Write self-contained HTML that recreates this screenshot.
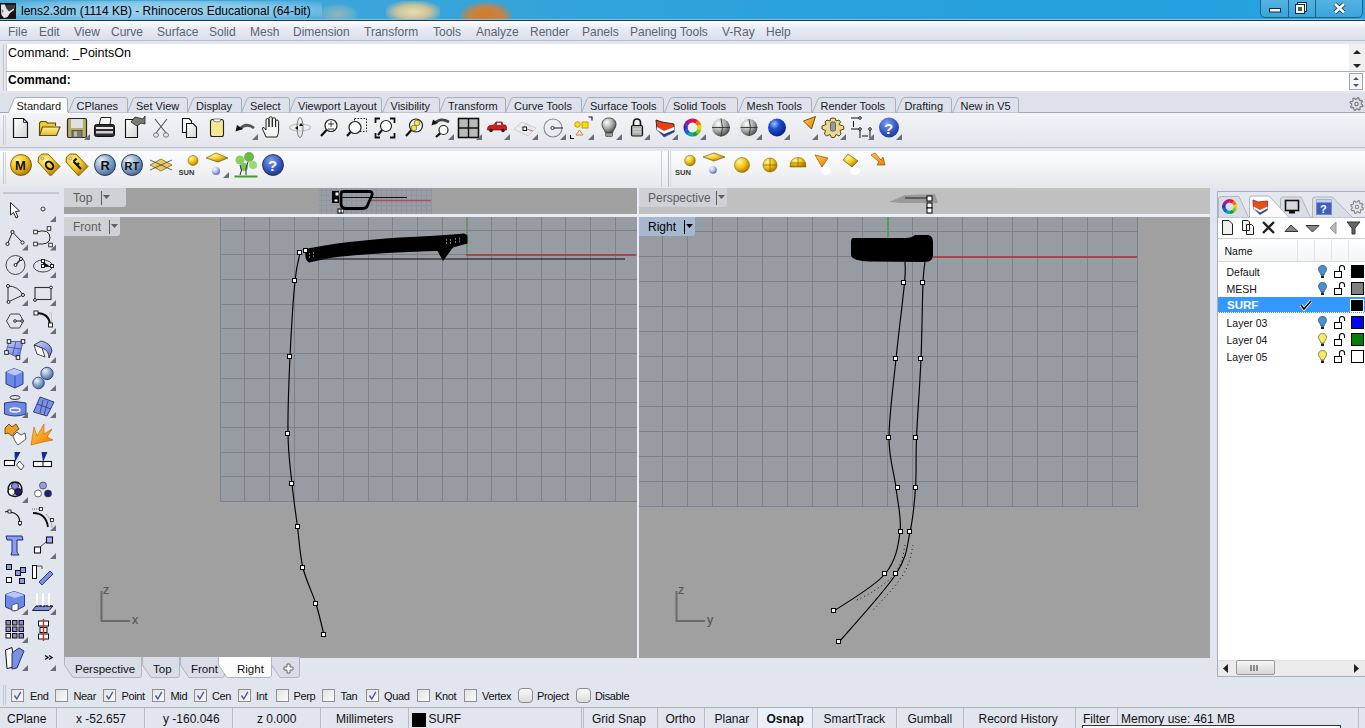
<!DOCTYPE html><html><head><meta charset="utf-8"><style>
*{margin:0;padding:0;box-sizing:border-box}
html,body{width:1365px;height:728px;overflow:hidden;background:#e1e5ee;font-family:"Liberation Sans",sans-serif;font-size:12px;color:#000;position:relative}
.a{position:absolute}
.t{position:absolute;white-space:nowrap;line-height:1}
svg{position:absolute;overflow:visible}
.tri{position:absolute;width:0;height:0;border-left:6px solid transparent;border-bottom:6px solid #6d7079}
.chk{position:absolute;width:13px;height:13px;border:1px solid #8f8f8f;background:linear-gradient(135deg,#e2e2e2,#fbfbfb)}
</style></head><body>
<div class="a" style="left:0px;top:0px;width:1365px;height:21px;background:linear-gradient(90deg,#4aaad9 0%,#3ea6da 20%,#30a3db 45%,#27a0dc 70%,#23a0dd 88%,#2ea4de 100%)"></div>
<div class="a" style="left:12px;top:1px;width:310px;height:19px;background:radial-gradient(ellipse at center,rgba(225,240,248,0.6) 0%,rgba(215,236,248,0.45) 55%,rgba(200,230,250,0) 100%)"></div>
<div class="a" style="left:318px;top:4px;width:40px;height:17px;background:radial-gradient(ellipse at 50% 60%,rgba(175,185,170,0.75) 0%,rgba(160,190,190,0.4) 50%,rgba(160,190,180,0) 75%)"></div>
<div class="a" style="left:386px;top:1px;width:54px;height:20px;background:radial-gradient(ellipse at 50% 55%,rgba(245,225,170,0.95) 0%,rgba(235,200,140,0.8) 45%,rgba(210,200,170,0) 80%)"></div>
<div class="a" style="left:460px;top:2px;width:52px;height:19px;background:radial-gradient(ellipse at 50% 80%,rgba(222,118,35,0.95) 0%,rgba(225,125,40,0.85) 45%,rgba(200,140,80,0) 78%)"></div>
<div class="a" style="left:0px;top:19px;width:1365px;height:1px;background:#7fc6ea"></div>
<div class="a" style="left:0px;top:20px;width:1365px;height:2px;background:#1f3346"></div>
<div class="a" style="left:0px;top:3px;width:16px;height:16px;background:#141414"></div>
<svg style="left:0px;top:3px" width="16" height="16" viewBox="0 0 16 16"><path d="M1 1.5 L5 1.5 L6 4 L14.5 2.5 L14 7 L10 10 L7.5 14 L4 15 L1.5 12 L1 8Z" fill="#e6e6e6"/><path d="M5.5 2 L14.5 2 L14 5.5 L9 8.5 L6 5Z" fill="#3a3a3a"/><path d="M1.5 6 L4 8 L2 10Z" fill="#777"/></svg>
<div class="t" style="left:21px;top:5px;font-size:12px;color:#000;">lens2.3dm (1114 KB) - Rhinoceros Educational (64-bit)</div>
<div class="a" style="left:1260px;top:-3px;width:103px;height:21px;border:1px solid #1d5f8a;border-radius:0 0 5px 5px;background:linear-gradient(#56b4e2,#3aa4dc)"></div>
<div class="a" style="left:1288px;top:0px;width:1px;height:17px;background:#1d5f8a"></div>
<div class="a" style="left:1315px;top:0px;width:1px;height:17px;background:#1d5f8a"></div>
<svg style="left:1260px;top:0px" width="103" height="18" viewBox="0 0 103 18"><rect x="9.5" y="8.5" width="11" height="3.5" fill="#f4f4f4" stroke="#1a2a3a" stroke-width="1"/><rect x="37.5" y="2.5" width="9" height="9" fill="#f4f4f4" stroke="#1a2a3a"/><rect x="35.5" y="4.5" width="9" height="9" fill="#f4f4f4" stroke="#1a2a3a"/><rect x="38" y="7" width="4" height="4" fill="#3a6a4a"/><path d="M75 4 L84 12.5 M84 4 L75 12.5" stroke="#1a2a3a" stroke-width="4.4"/><path d="M75 4 L84 12.5 M84 4 L75 12.5" stroke="#f6f6f6" stroke-width="2.8"/></svg>
<div class="a" style="left:0px;top:21px;width:1365px;height:20px;background:linear-gradient(#fbfcfe 0%,#e8ebf4 40%,#d9deec 100%)"></div>
<div class="a" style="left:0px;top:40px;width:1365px;height:1px;background:#b6bcc9"></div>
<div class="t" style="left:8px;top:25.5px;font-size:12px;color:#5a6474;">File</div>
<div class="t" style="left:39px;top:25.5px;font-size:12px;color:#5a6474;">Edit</div>
<div class="t" style="left:74px;top:25.5px;font-size:12px;color:#5a6474;">View</div>
<div class="t" style="left:111px;top:25.5px;font-size:12px;color:#5a6474;">Curve</div>
<div class="t" style="left:157px;top:25.5px;font-size:12px;color:#5a6474;">Surface</div>
<div class="t" style="left:209px;top:25.5px;font-size:12px;color:#5a6474;">Solid</div>
<div class="t" style="left:250px;top:25.5px;font-size:12px;color:#5a6474;">Mesh</div>
<div class="t" style="left:293px;top:25.5px;font-size:12px;color:#5a6474;">Dimension</div>
<div class="t" style="left:364px;top:25.5px;font-size:12px;color:#5a6474;">Transform</div>
<div class="t" style="left:433px;top:25.5px;font-size:12px;color:#5a6474;">Tools</div>
<div class="t" style="left:476px;top:25.5px;font-size:12px;color:#5a6474;">Analyze</div>
<div class="t" style="left:530px;top:25.5px;font-size:12px;color:#5a6474;">Render</div>
<div class="t" style="left:582px;top:25.5px;font-size:12px;color:#5a6474;">Panels</div>
<div class="t" style="left:630px;top:25.5px;font-size:12px;color:#5a6474;">Paneling Tools</div>
<div class="t" style="left:722px;top:25.5px;font-size:12px;color:#5a6474;">V-Ray</div>
<div class="t" style="left:766px;top:25.5px;font-size:12px;color:#5a6474;">Help</div>
<div class="a" style="left:0px;top:41px;width:1365px;height:52px;background:#e4e7ee"></div>
<div class="a" style="left:3px;top:44px;width:1px;height:47px;background:#c0c4cc"></div>
<div class="a" style="left:6px;top:44px;width:1359px;height:47px;background:#fff;border-left:1px solid #c5c9d2"></div>
<div class="a" style="left:6px;top:71px;width:1359px;height:1px;background:#a9aeb7"></div>
<div class="t" style="left:8px;top:47px;font-size:12.5px;color:#000;">Command: _PointsOn</div>
<div class="t" style="left:8px;top:74px;font-size:12px;color:#000;font-weight:bold">Command:</div>
<div class="a" style="left:1349px;top:44px;width:16px;height:27px;background:#f0f0f0"></div>
<svg style="left:1349px;top:44px" width="16" height="47" viewBox="0 0 16 47"><path d="M4 10 L8 6 L12 10Z M4 20 L8 24 L12 20Z" fill="#222"/><rect x="0.5" y="29.5" width="13" height="16" fill="#f4f5f8" stroke="#a0a4ac"/><path d="M4 36 L7 33 L10 36Z M4 40 L7 43 L10 40Z" fill="#556"/></svg>
<div class="a" style="left:0px;top:93px;width:1365px;height:20px;background:#dde1ea"></div>
<div class="a" style="left:0px;top:112px;width:1365px;height:1px;background:#a3a9b4"></div>
<svg style="left:952px;top:97px" width="75" height="16" viewBox="0 0 75 16"><path d="M0.5 15.5 L6 2 Q7 0.5 9 0.5 L64 0.5 Q66.5 0.5 66.5 3 L66.5 15.5" fill="#dde1ec" stroke="#a9afbb"/></svg>
<div class="t" style="left:960.5px;top:101px;font-size:11px;color:#1a1a1a;">New in V5</div>
<svg style="left:896px;top:97px" width="64" height="16" viewBox="0 0 64 16"><path d="M0.5 15.5 L6 2 Q7 0.5 9 0.5 L53 0.5 Q55.5 0.5 55.5 3 L55.5 15.5" fill="#dde1ec" stroke="#a9afbb"/></svg>
<div class="t" style="left:904.5px;top:101px;font-size:11px;color:#1a1a1a;">Drafting</div>
<svg style="left:812px;top:97px" width="92" height="16" viewBox="0 0 92 16"><path d="M0.5 15.5 L6 2 Q7 0.5 9 0.5 L81 0.5 Q83.5 0.5 83.5 3 L83.5 15.5" fill="#dde1ec" stroke="#a9afbb"/></svg>
<div class="t" style="left:820.5px;top:101px;font-size:11px;color:#1a1a1a;">Render Tools</div>
<svg style="left:738px;top:97px" width="82" height="16" viewBox="0 0 82 16"><path d="M0.5 15.5 L6 2 Q7 0.5 9 0.5 L71 0.5 Q73.5 0.5 73.5 3 L73.5 15.5" fill="#dde1ec" stroke="#a9afbb"/></svg>
<div class="t" style="left:746.5px;top:101px;font-size:11px;color:#1a1a1a;">Mesh Tools</div>
<svg style="left:664px;top:97px" width="82" height="16" viewBox="0 0 82 16"><path d="M0.5 15.5 L6 2 Q7 0.5 9 0.5 L71 0.5 Q73.5 0.5 73.5 3 L73.5 15.5" fill="#dde1ec" stroke="#a9afbb"/></svg>
<div class="t" style="left:673px;top:101px;font-size:11px;color:#1a1a1a;">Solid Tools</div>
<svg style="left:581px;top:97px" width="91" height="16" viewBox="0 0 91 16"><path d="M0.5 15.5 L6 2 Q7 0.5 9 0.5 L80 0.5 Q82.5 0.5 82.5 3 L82.5 15.5" fill="#dde1ec" stroke="#a9afbb"/></svg>
<div class="t" style="left:590px;top:101px;font-size:11px;color:#1a1a1a;">Surface Tools</div>
<svg style="left:505px;top:97px" width="85" height="16" viewBox="0 0 85 16"><path d="M0.5 15.5 L6 2 Q7 0.5 9 0.5 L74 0.5 Q76.5 0.5 76.5 3 L76.5 15.5" fill="#dde1ec" stroke="#a9afbb"/></svg>
<div class="t" style="left:514px;top:101px;font-size:11px;color:#1a1a1a;">Curve Tools</div>
<svg style="left:439px;top:97px" width="75" height="16" viewBox="0 0 75 16"><path d="M0.5 15.5 L6 2 Q7 0.5 9 0.5 L64 0.5 Q66.5 0.5 66.5 3 L66.5 15.5" fill="#dde1ec" stroke="#a9afbb"/></svg>
<div class="t" style="left:448px;top:101px;font-size:11px;color:#1a1a1a;">Transform</div>
<svg style="left:382px;top:97px" width="66" height="16" viewBox="0 0 66 16"><path d="M0.5 15.5 L6 2 Q7 0.5 9 0.5 L55 0.5 Q57.5 0.5 57.5 3 L57.5 15.5" fill="#dde1ec" stroke="#a9afbb"/></svg>
<div class="t" style="left:390.5px;top:101px;font-size:11px;color:#1a1a1a;">Visibility</div>
<svg style="left:289px;top:97px" width="101" height="16" viewBox="0 0 101 16"><path d="M0.5 15.5 L6 2 Q7 0.5 9 0.5 L90 0.5 Q92.5 0.5 92.5 3 L92.5 15.5" fill="#dde1ec" stroke="#a9afbb"/></svg>
<div class="t" style="left:298px;top:101px;font-size:11px;color:#1a1a1a;">Viewport Layout</div>
<svg style="left:241px;top:97px" width="57" height="16" viewBox="0 0 57 16"><path d="M0.5 15.5 L6 2 Q7 0.5 9 0.5 L46 0.5 Q48.5 0.5 48.5 3 L48.5 15.5" fill="#dde1ec" stroke="#a9afbb"/></svg>
<div class="t" style="left:250px;top:101px;font-size:11px;color:#1a1a1a;">Select</div>
<svg style="left:187px;top:97px" width="63" height="16" viewBox="0 0 63 16"><path d="M0.5 15.5 L6 2 Q7 0.5 9 0.5 L52 0.5 Q54.5 0.5 54.5 3 L54.5 15.5" fill="#dde1ec" stroke="#a9afbb"/></svg>
<div class="t" style="left:196px;top:101px;font-size:11px;color:#1a1a1a;">Display</div>
<svg style="left:127px;top:97px" width="69" height="16" viewBox="0 0 69 16"><path d="M0.5 15.5 L6 2 Q7 0.5 9 0.5 L58 0.5 Q60.5 0.5 60.5 3 L60.5 15.5" fill="#dde1ec" stroke="#a9afbb"/></svg>
<div class="t" style="left:136px;top:101px;font-size:11px;color:#1a1a1a;">Set View</div>
<svg style="left:68px;top:97px" width="68" height="16" viewBox="0 0 68 16"><path d="M0.5 15.5 L6 2 Q7 0.5 9 0.5 L57 0.5 Q59.5 0.5 59.5 3 L59.5 15.5" fill="#dde1ec" stroke="#a9afbb"/></svg>
<div class="t" style="left:76.5px;top:101px;font-size:11px;color:#1a1a1a;">CPlanes</div>
<svg style="left:8px;top:97px" width="68" height="16" viewBox="0 0 68 16"><path d="M0.5 15.5 L6 2 Q7 0.5 9 0.5 L57 0.5 Q59.5 0.5 59.5 3 L59.5 15.5" fill="#fbfbfd" stroke="#a9afbb"/></svg>
<div class="a" style="left:9px;top:112px;width:59px;height:2px;background:#fbfbfd"></div>
<div class="t" style="left:16.5px;top:101px;font-size:11px;color:#1a1a1a;">Standard</div>
<svg style="left:1349px;top:96px" width="16" height="16" viewBox="0 0 16 16"><path d="M12.30 8.00 L13.88 9.27 L13.51 10.49 L11.49 10.67 L10.89 11.39 L11.11 13.40 L9.99 14.01 L8.44 12.71 L7.50 12.80 L6.23 14.38 L5.01 14.01 L4.83 11.99 L4.11 11.39 L2.10 11.61 L1.49 10.49 L2.79 8.94 L2.70 8.00 L1.12 6.73 L1.49 5.51 L3.51 5.33 L4.11 4.61 L3.89 2.60 L5.01 1.99 L6.56 3.29 L7.50 3.20 L8.77 1.62 L9.99 1.99 L10.17 4.01 L10.89 4.61 L12.90 4.39 L13.51 5.51 L12.21 7.06Z" fill="none" stroke="#777" stroke-width="1.1" stroke-linejoin="round"/><circle cx="7.5" cy="8" r="1.68" fill="none" stroke="#777" stroke-width="1.1"/></svg>
<div class="a" style="left:0px;top:113px;width:1365px;height:34px;background:linear-gradient(#f3f4f7,#e2e5eb)"></div>
<div class="a" style="left:3px;top:115px;width:1px;height:30px;background:#c5c9d1"></div>
<div class="a" style="left:0px;top:147px;width:1365px;height:1px;background:#b9bec8"></div>
<div class="a" style="left:0px;top:148px;width:1365px;height:3px;background:#e1e5ee"></div>
<div class="a" style="left:0px;top:151px;width:1365px;height:37px;background:linear-gradient(#fdfdfe,#f6f7f8 30%,#e5e7eb)"></div>
<div class="a" style="left:661px;top:151px;width:1px;height:36px;background:#c9ccd2"></div>
<div class="a" style="left:668px;top:151px;width:1px;height:36px;background:#b9bcc2"></div>
<div class="a" style="left:670px;top:151px;width:1px;height:36px;background:#d5d8dd"></div>
<div class="a" style="left:3px;top:152px;width:1px;height:32px;background:#c3c7cf"></div>
<div class="a" style="left:5px;top:152px;width:1px;height:32px;background:#d3d6dc"></div>
<div class="a" style="left:5px;top:115px;width:1px;height:30px;background:#d3d6dc"></div>
<div class="a" style="left:3px;top:192px;width:56px;height:2px;background:#c3c7cf"></div>
<svg style="left:0;top:0" width="1365" height="728" viewBox="0 0 1365 728"><defs>
<linearGradient id="gDoc" x1="0" y1="0" x2="1" y2="1"><stop offset="0" stop-color="#fff"/><stop offset="1" stop-color="#d4d4d4"/></linearGradient>
<linearGradient id="gYel" x1="0" y1="0" x2="0" y2="1"><stop offset="0" stop-color="#fff3a0"/><stop offset="1" stop-color="#e8b820"/></linearGradient>
<radialGradient id="gGold" cx="0.35" cy="0.3" r="0.75"><stop offset="0" stop-color="#fff6a0"/><stop offset="0.5" stop-color="#f5c518"/><stop offset="1" stop-color="#a87400"/></radialGradient>
<radialGradient id="gBlueS" cx="0.35" cy="0.3" r="0.8"><stop offset="0" stop-color="#e8f0ff"/><stop offset="0.45" stop-color="#8aa8d8"/><stop offset="1" stop-color="#2c4f8c"/></radialGradient>
<radialGradient id="gGray" cx="0.35" cy="0.3" r="0.8"><stop offset="0" stop-color="#fff"/><stop offset="0.5" stop-color="#aaa"/><stop offset="1" stop-color="#333"/></radialGradient>
<radialGradient id="gBlue" cx="0.35" cy="0.3" r="0.8"><stop offset="0" stop-color="#9fc4ff"/><stop offset="0.35" stop-color="#2050d0"/><stop offset="1" stop-color="#001a70"/></radialGradient>
<radialGradient id="gHelp" cx="0.4" cy="0.3" r="0.8"><stop offset="0" stop-color="#7e9ff0"/><stop offset="0.6" stop-color="#2f55c0"/><stop offset="1" stop-color="#1b3080"/></radialGradient>
<radialGradient id="gSB" cx="0.35" cy="0.3" r="0.8"><stop offset="0" stop-color="#eef4fa"/><stop offset="0.5" stop-color="#88a8cc"/><stop offset="1" stop-color="#3a5a88"/></radialGradient>
<radialGradient id="gSB2" cx="0.35" cy="0.3" r="0.8"><stop offset="0" stop-color="#fff"/><stop offset="0.5" stop-color="#a8b8e8"/><stop offset="1" stop-color="#4058b0"/></radialGradient>
<linearGradient id="gBlueF" x1="0" y1="0" x2="1" y2="1"><stop offset="0" stop-color="#c8d4ff"/><stop offset="1" stop-color="#5a70d8"/></linearGradient>
<linearGradient id="gOr" x1="0" y1="0" x2="1" y2="1"><stop offset="0" stop-color="#ffd040"/><stop offset="1" stop-color="#ee7a00"/></linearGradient>
<linearGradient id="gWheel" x1="0" y1="0" x2="1" y2="1"><stop offset="0" stop-color="#e0107a"/><stop offset="0.3" stop-color="#ffb000"/><stop offset="0.55" stop-color="#30c040"/><stop offset="0.8" stop-color="#2090f0"/><stop offset="1" stop-color="#7020b0"/></linearGradient>
</defs><path d="M13.5 118.5 H23.5 L27.5 122.5 V137.5 H13.5Z" fill="url(#gDoc)" stroke="#111" stroke-width="1.2"/><path d="M23.5 118.5 V122.5 H27.5" fill="none" stroke="#111" stroke-width="0.8"/><path d="M39.5 135.5 V123 L41 121.5 H46 L47.5 123 H55.5 V126" fill="#f0c838" stroke="#5e4a08" stroke-width="1.1"/><path d="M39.5 135.5 L42.5 127 H60 L56.5 135.5Z" fill="url(#gYel)" stroke="#5e4a08" stroke-width="1.1"/><rect x="67.5" y="118.5" width="19" height="19" rx="1.5" fill="#b5ad6a" stroke="#2a2a1a" stroke-width="1.2"/><rect x="71" y="119" width="12" height="9" fill="#e0e0e0"/><rect x="72" y="130.5" width="10" height="7" fill="#7d7d70" stroke="#333" stroke-width="0.6"/><rect x="74" y="131.5" width="3" height="5" fill="#bbb"/><path d="M90 140 L84 140 L90 134Z" fill="#6b6e76"/><path d="M99 125 L101 117.5 H111 L110 125Z" fill="#f4f4f4" stroke="#222" stroke-width="1"/><rect x="94.5" y="124.5" width="20" height="12" rx="2" fill="#2c2c2c" stroke="#111"/><rect x="96" y="127" width="17" height="2" fill="#e8e8e8"/><rect x="96" y="131" width="17" height="2.5" fill="#cfcfcf"/><path d="M125.5 119.5 H133 L137.5 124 V137.5 H125.5Z" fill="url(#gDoc)" stroke="#111" stroke-width="1.1"/><path d="M131 122 L135 117 L143 119 L145 116 V124 L141 123 L137 126Z" fill="#7a7a7a" stroke="#222" stroke-width="0.8"/><path d="M155 119 L166 133 M167 119 L156 133" stroke="#555" stroke-width="1.1" fill="none"/><ellipse cx="156" cy="135" rx="2.5" ry="2.2" fill="none" stroke="#777" stroke-width="1"/><ellipse cx="166" cy="135" rx="2.5" ry="2.2" fill="none" stroke="#777" stroke-width="1"/><path d="M182.5 118.5 H189 L191.5 121 V132.5 H182.5Z" fill="#fff" stroke="#111" stroke-width="1.1"/><path d="M186.5 123.5 H193 L196.5 127 V137.5 H186.5Z" fill="url(#gDoc)" stroke="#111" stroke-width="1.1"/><rect x="210.5" y="119.5" width="13" height="17" rx="2" fill="#f6e890" stroke="#222" stroke-width="1.1"/><path d="M213.5 119 H220.5 V121 Q217 123 213.5 121Z" fill="#fff" stroke="#555" stroke-width="0.7"/><path d="M240 129 Q246 122 254 128" fill="none" stroke="#555" stroke-width="2.8"/><path d="M235.5 131.5 L237 125 L243 129Z" fill="#111"/><path d="M258 140 L252 140 L258 134Z" fill="#6b6e76"/><path d="M266 137 L262.5 129 Q262 127 264 127.5 L266 130 V120 Q266 118.5 267.5 118.5 Q269 118.5 269 120 V127 V118 Q269 116.8 270.7 116.8 Q272.3 116.8 272.3 118 V127 V119 Q272.3 117.8 274 117.8 Q275.6 117.8 275.6 119 V127 V121 Q275.6 120 277 120 Q278.6 120 278.6 121.5 V130 Q278.6 134 277 137Z" fill="#f4f4f4" stroke="#222" stroke-width="1"/><ellipse cx="300" cy="127.5" rx="10.5" ry="3.5" fill="none" stroke="#c0c0c0" stroke-width="1.2"/><ellipse cx="300" cy="127.5" rx="3" ry="10" fill="none" stroke="#777" stroke-width="1"/><path d="M301 123 L303 126 H299Z M295 128 L298 126 V130Z" fill="#111"/><line x1="326.8" y1="129.7" x2="321" y2="136" stroke="#111" stroke-width="2.2"/><circle cx="331" cy="125.5" r="6" fill="#fff" stroke="#222" stroke-width="1.2"/><path d="M328 124 H334 M331 121 V127 M328 129 H334" stroke="#222" stroke-width="0.9"/><rect x="354.5" y="118.5" width="12" height="13" fill="none" stroke="#222" stroke-width="1" stroke-dasharray="1.6 1.4"/><line x1="350.8" y1="131.7" x2="347" y2="136" stroke="#111" stroke-width="2.2"/><circle cx="355" cy="127.5" r="6" fill="#fff" stroke="#222" stroke-width="1.2"/><path d="M375.5 123 V118.5 H380 M390 118.5 H394.5 V123 M375.5 133 V137.5 H380 M390 137.5 H394.5 V133" fill="none" stroke="#111" stroke-width="1.8"/><line x1="382.15" y1="129.85" x2="378" y2="135" stroke="#111" stroke-width="2.2"/><circle cx="386" cy="126" r="5.5" fill="#fff" stroke="#222" stroke-width="1.2"/><line x1="411.45" y1="130.05" x2="406" y2="136" stroke="#111" stroke-width="2.2"/><circle cx="416" cy="125.5" r="6.5" fill="#f3f3f3" stroke="#222" stroke-width="1.2"/><circle cx="417" cy="123" r="2.8" fill="#ffe830" stroke="#666" stroke-width="0.8"/><circle cx="414" cy="128" r="2.8" fill="#ffe830" stroke="#666" stroke-width="0.8"/><path d="M434 124 Q440 117 449 122" fill="none" stroke="#444" stroke-width="2.6"/><path d="M431.5 125.5 L433 119.5 L438 123Z" fill="#111"/><line x1="440.35" y1="133.15" x2="436" y2="137" stroke="#111" stroke-width="2.2"/><circle cx="443.5" cy="130" r="4.5" fill="#fff" stroke="#222" stroke-width="1.2"/><path d="M454 140 L448 140 L454 134Z" fill="#6b6e76"/><rect x="458.5" y="118.5" width="20" height="19" fill="#b9b9b9" stroke="#111" stroke-width="1.6"/><path d="M468.5 118.5 V137.5 M458.5 128 H478.5" stroke="#111" stroke-width="1.4"/><path d="M482 140 L476 140 L482 134Z" fill="#6b6e76"/><path d="M487.5 129 Q487.5 126 490 125.5 L494 125 L496 122 H502 L503 125 H505.5 Q506.5 126 506.5 128 V130 H487.5Z" fill="#d01c1c" stroke="#7a0a0a" stroke-width="0.7"/><circle cx="491" cy="130.5" r="1.8" fill="#222"/><circle cx="503" cy="130.5" r="1.8" fill="#222"/><rect x="497" y="122.8" width="4" height="2.2" fill="#fff"/><path d="M510 140 L504 140 L510 134Z" fill="#6b6e76"/><path d="M514 129 L522 122 L536 128 L528 136Z" fill="none" stroke="#c8c8c8" stroke-width="0.9"/><path d="M518 126 L532 132 M526 124 L532 129 M522 128 L528 122" stroke="#d0c0c0" stroke-width="0.6"/><rect x="523" y="127" width="3.5" height="3.5" fill="#fff" stroke="#111" stroke-width="1"/><path d="M527 129 L533 131" stroke="#b05050" stroke-width="0.7"/><path d="M538 140 L532 140 L538 134Z" fill="#6b6e76"/><circle cx="553" cy="128" r="9" fill="none" stroke="#888" stroke-width="1.1"/><line x1="554" y1="128" x2="563" y2="128" stroke="#222" stroke-width="1"/><circle cx="552.5" cy="128" r="1.6" fill="#fff" stroke="#222" stroke-width="0.9"/><path d="M566 140 L560 140 L566 134Z" fill="#6b6e76"/><circle cx="577.5" cy="124.5" r="2.8" fill="#ffe000" stroke="#b09000" stroke-width="0.8"/><rect x="582" y="122" width="6" height="6" fill="#ffe000" stroke="#b09000" stroke-width="0.8"/><path d="M576 135 L579.5 130 L583 135Z" fill="none" stroke="#d08030" stroke-width="1"/><path d="M570.5 135 V138.5 H574 M588.5 117 H592 V120.5" fill="none" stroke="#111" stroke-width="1.1"/><path d="M594 140 L588 140 L594 134Z" fill="#6b6e76"/><path d="M609 118 C614 118 616 121 616 124.5 C616 128 613 130 612.5 133 H605.5 C605 130 602 128 602 124.5 C602 121 604 118 609 118Z" fill="url(#gGray)" stroke="#444" stroke-width="0.9"/><rect x="605.5" y="133" width="7" height="3.5" rx="1" fill="#999" stroke="#444" stroke-width="0.7"/><path d="M622 140 L616 140 L622 134Z" fill="#6b6e76"/><path d="M633.5 126 V123 Q633.5 119 637 119 Q640.5 119 640.5 123 V126" fill="none" stroke="#111" stroke-width="1.6"/><rect x="631.5" y="125.5" width="11" height="10.5" rx="1.2" fill="#b0b0b0" stroke="#111" stroke-width="1.2"/><path d="M633 129 H641 M633 132 H641" stroke="#ddd" stroke-width="1.1"/><path d="M650 140 L644 140 L650 134Z" fill="#6b6e76"/><path d="M656 120 L662 122 L674 124 V132 L664 137 L657 130Z" fill="#e84010" stroke="#222" stroke-width="0.9"/><path d="M657 127 L664 131 L674 127 V132 L664 137 L657 130Z" fill="#fff"/><path d="M657.5 130 L664 134 L674 130 V132 L664 137Z" fill="#2a3e90"/><path d="M678 140 L672 140 L678 134Z" fill="#6b6e76"/><path d="M692.36 120.50 A7 7 0 0 1 696.73 121.92" fill="none" stroke="#e8102a" stroke-width="4.2"/><path d="M696.50 121.76 A7 7 0 0 1 699.20 125.47" fill="none" stroke="#f07010" stroke-width="4.2"/><path d="M699.11 125.20 A7 7 0 0 1 699.11 129.80" fill="none" stroke="#f0d000" stroke-width="4.2"/><path d="M699.20 129.53 A7 7 0 0 1 696.50 133.24" fill="none" stroke="#80c820" stroke-width="4.2"/><path d="M696.73 133.08 A7 7 0 0 1 692.36 134.50" fill="none" stroke="#10a040" stroke-width="4.2"/><path d="M692.64 134.50 A7 7 0 0 1 688.27 133.08" fill="none" stroke="#10a0a0" stroke-width="4.2"/><path d="M688.50 133.24 A7 7 0 0 1 685.80 129.53" fill="none" stroke="#1060e0" stroke-width="4.2"/><path d="M685.89 129.80 A7 7 0 0 1 685.89 125.20" fill="none" stroke="#3030b0" stroke-width="4.2"/><path d="M685.80 125.47 A7 7 0 0 1 688.50 121.76" fill="none" stroke="#8020a0" stroke-width="4.2"/><path d="M688.27 121.92 A7 7 0 0 1 692.64 120.50" fill="none" stroke="#c01070" stroke-width="4.2"/><path d="M706 140 L700 140 L706 134Z" fill="#6b6e76"/><circle cx="721" cy="127.5" r="9" fill="url(#gGray)"/><path d="M712 127.5 H730 M721 118.5 Q724 127 721 136.5" fill="none" stroke="#333" stroke-width="0.9"/><rect x="740" y="118" width="18" height="19" fill="none" stroke="#d0d0d0" stroke-width="0.6" stroke-dasharray="1 1"/><circle cx="749" cy="127.5" r="8.5" fill="url(#gGray)"/><path d="M740.5 127.5 H757.5 M749 119 Q752 127 749 136" fill="none" stroke="#333" stroke-width="0.9"/><path d="M762 140 L756 140 L762 134Z" fill="#6b6e76"/><circle cx="777" cy="127.5" r="9" fill="url(#gBlue)"/><path d="M790 140 L784 140 L790 134Z" fill="#6b6e76"/><path d="M803.5 121 L815.5 116.5 L811.5 129Z" fill="url(#gOr)" stroke="#6a4010" stroke-width="0.9"/><path d="M818 140 L812 140 L818 134Z" fill="#6b6e76"/><path d="M833 118 L835.5 118.5 L836 121 L839 120 L840.5 122 L839 124.5 L843.5 126 L844 129 L840 130.5 L841 134 L839 136 L836 134.5 L834.5 137.5 L831.5 137.5 L830 134.5 L826.5 136 L824.5 134 L825.5 130.5 L822 129 L822 126 L826 124.5 L825 122 L827 120 L830 121 L830.5 118.5Z" fill="#e8d890" stroke="#5a4a10" stroke-width="1"/><rect x="830.5" y="122" width="5" height="9" rx="1.5" fill="#999" stroke="#444" stroke-width="0.7"/><path d="M846 140 L840 140 L846 134Z" fill="#6b6e76"/><path d="M851 118 H859 M851 129 H860 M860 129 V138 M870 129 V138 M853.5 121 V127 M862 136 H868" stroke="#111" stroke-width="1" fill="none"/><circle cx="860" cy="118" r="1.3" fill="#fff" stroke="#111"/><circle cx="860" cy="129" r="1.3" fill="#fff" stroke="#111"/><circle cx="870" cy="129" r="1.3" fill="#fff" stroke="#111"/><path d="M874 140 L868 140 L874 134Z" fill="#6b6e76"/><circle cx="889" cy="127.5" r="10" fill="url(#gHelp)"/><text x="884" y="133.5" font-family="Liberation Sans" font-size="15" font-weight="bold" fill="#fff">?</text><path d="M902 140 L896 140 L902 134Z" fill="#6b6e76"/><circle cx="21" cy="165" r="10.5" fill="url(#gGold)" stroke="#6a4a00" stroke-width="0.8"/><text x="15" y="170" font-family="Liberation Sans" font-size="13" font-weight="bold" fill="#111">M</text><path d="M38 162 L38.5 157 L42 154 L48 154 L60 166.5 L50.5 176 Z" fill="url(#gGold)" stroke="#7a5a00" stroke-width="0.9"/><circle cx="42.5" cy="158.5" r="1.3" fill="#fff" stroke="#666" stroke-width="0.6"/><ellipse cx="49.5" cy="165.5" rx="4.2" ry="3.2" transform="rotate(45 49.5 165.5)" fill="none" stroke="#111" stroke-width="2"/><path d="M66 162 L66.5 157 L70 154 L76 154 L88 166.5 L78.5 176 Z" fill="url(#gGold)" stroke="#7a5a00" stroke-width="0.9"/><circle cx="70.5" cy="158.5" r="1.3" fill="#fff" stroke="#666" stroke-width="0.6"/><path d="M73.5 161.5 L81 169 M73.5 161.5 L76.5 158.5 M77 165 L79 163" stroke="#111" stroke-width="2.2" fill="none"/><circle cx="105" cy="165" r="10.5" fill="url(#gSB)" stroke="#1a2a5a" stroke-width="0.9"/><text x="100.5" y="170" font-family="Liberation Sans" font-size="13" font-weight="bold" fill="#111">R</text><circle cx="132" cy="165" r="10.5" fill="url(#gSB)" stroke="#1a2a5a" stroke-width="0.9"/><text x="124.5" y="169.5" font-family="Liberation Sans" font-size="11" font-weight="bold" fill="#111">RT</text><path d="M150 165 L161 159 L172 165 L161 171Z" fill="#e8c860" stroke="#7a5a10" stroke-width="0.7"/><path d="M150 160 L172 170 M150 170 L172 160" stroke="#555" stroke-width="0.9"/><circle cx="193" cy="160.5" r="5" fill="url(#gGold)" stroke="#8a6400" stroke-width="0.6"/><text x="178.5" y="175" font-family="Liberation Sans" font-size="7.5" font-weight="bold" fill="#333">SUN</text><path d="M206 158 L216 153 L228 158 L218 162Z" fill="url(#gGold)" stroke="#7a5a10" stroke-width="0.7"/><circle cx="216" cy="171" r="4" fill="url(#gSB2)"/><path d="M229 178 L223 178 L229 172Z" fill="#6b6e76"/><path d="M234.5 176.5 H257.5" stroke="#4a9a2a" stroke-width="2"/><circle cx="240" cy="160" r="4.5" fill="#8ad060"/><circle cx="249" cy="157" r="5" fill="#6ab84a"/><circle cx="253" cy="165" r="4" fill="#9ad870"/><circle cx="244" cy="167" r="4" fill="#7cc45a"/><path d="M246 175 Q245 168 248 162 M240 175 Q243 170 240 165" stroke="#333" stroke-width="1" fill="none"/><circle cx="273" cy="165" r="10.5" fill="url(#gHelp)" stroke="#111" stroke-width="0.7"/><text x="268" y="171" font-family="Liberation Sans" font-size="15" font-weight="bold" fill="#fff">?</text><circle cx="690" cy="160.5" r="5.3" fill="url(#gGold)" stroke="#8a6400" stroke-width="0.6"/><text x="675" y="175" font-family="Liberation Sans" font-size="7.5" font-weight="bold" fill="#333">SUN</text><path d="M703 157 L714 153 L725 157 L714 161Z" fill="url(#gGold)" stroke="#7a5a10" stroke-width="0.7"/><circle cx="713" cy="170" r="3.8" fill="url(#gSB2)"/><circle cx="742" cy="165" r="7.5" fill="url(#gGold)" stroke="#8a6400" stroke-width="0.6"/><circle cx="770" cy="165" r="7" fill="url(#gGold)" stroke="#8a6400" stroke-width="0.6"/><path d="M763 165 H777 M770 158 V172" stroke="#8a6400" stroke-width="0.8"/><path d="M790 167 Q790 157.5 798 157.5 Q806 157.5 806 167Z" fill="url(#gGold)" stroke="#8a6400" stroke-width="0.6"/><path d="M798 157.5 V167 M790 163 H806" stroke="#8a6400" stroke-width="0.7"/><ellipse cx="826" cy="171" rx="5" ry="4" fill="#fff" opacity="0.9"/><path d="M815 155 L828 158 L822 167Z" fill="url(#gOr)" stroke="#7a5a10" stroke-width="0.7"/><ellipse cx="855" cy="171" rx="5" ry="4" fill="#fff" opacity="0.9"/><path d="M843 160 L848 154 L858 161 L852 167Z" fill="url(#gGold)" stroke="#7a5a10" stroke-width="0.7"/><path d="M871 155 L875 153 L881 160 L883 157 L885 165 L877 165 L879 162Z" fill="url(#gOr)" stroke="#7a5a10" stroke-width="0.7"/><path d="M10.5 202.5 V215 L13.5 212.5 L16 218 L18 217 L15.5 211.5 L19.5 211Z" fill="#fff" stroke="#222" stroke-width="1"/><circle cx="43" cy="209" r="2" fill="#fff" stroke="#333" stroke-width="1"/><path d="M56 222 L50 222 L56 216Z" fill="#6b6e76"/><path d="M7.5 244 L12.5 232 L22.5 242.5" fill="none" stroke="#222" stroke-width="1"/><circle cx="7.5" cy="244" r="1.6" fill="#fff" stroke="#222"/><circle cx="12.5" cy="232" r="1.6" fill="#fff" stroke="#222"/><circle cx="22.5" cy="242.5" r="1.6" fill="#fff" stroke="#222"/><path d="M28 250.5 L22 250.5 L28 244.5Z" fill="#6b6e76"/><path d="M36 232 Q50 228 50 238 Q50 245 37 244" fill="none" stroke="#222" stroke-width="1"/><rect x="33.7" y="230.2" width="3.6" height="3.6" fill="#fff" stroke="#222" stroke-width="0.9"/><rect x="47.2" y="226.7" width="3.6" height="3.6" fill="#fff" stroke="#222" stroke-width="0.9"/><rect x="33.7" y="242.2" width="3.6" height="3.6" fill="#fff" stroke="#222" stroke-width="0.9"/><rect x="48.7" y="243.2" width="3.6" height="3.6" fill="#fff" stroke="#222" stroke-width="0.9"/><path d="M56 250.5 L50 250.5 L56 244.5Z" fill="#6b6e76"/><circle cx="15.5" cy="265" r="9.5" fill="none" stroke="#444" stroke-width="1"/><line x1="15.5" y1="265" x2="21" y2="259" stroke="#222" stroke-width="1.2"/><circle cx="15.5" cy="265" r="1.5" fill="#fff" stroke="#222"/><circle cx="21" cy="259" r="1.5" fill="#fff" stroke="#222"/><path d="M28 278 L22 278 L28 272Z" fill="#6b6e76"/><ellipse cx="43" cy="266" rx="9.5" ry="6" fill="none" stroke="#444" stroke-width="1"/><path d="M43.5 262 V266.5 H50" stroke="#222" stroke-width="1"/><rect x="41.5" y="259.5" width="3" height="3" fill="#fff" stroke="#222" stroke-width="1"/><rect x="41.5" y="264.5" width="3" height="3" fill="#fff" stroke="#222" stroke-width="1"/><rect x="50.5" y="264.5" width="3" height="3" fill="#fff" stroke="#222" stroke-width="1"/><path d="M56 278 L50 278 L56 272Z" fill="#6b6e76"/><path d="M8 286 Q18 286 23 295 L8 302Z" fill="none" stroke="#333" stroke-width="1"/><circle cx="8" cy="286" r="1.5" fill="#fff" stroke="#222"/><circle cx="23" cy="295" r="1.5" fill="#fff" stroke="#222"/><circle cx="8.5" cy="302" r="1.5" fill="#fff" stroke="#222"/><path d="M28 306 L22 306 L28 300Z" fill="#6b6e76"/><rect x="35" y="287.5" width="16" height="12" fill="none" stroke="#333" stroke-width="1.1"/><circle cx="51" cy="287.5" r="1.4" fill="#fff" stroke="#222"/><circle cx="35" cy="300" r="1.4" fill="#fff" stroke="#222"/><path d="M56 306 L50 306 L56 300Z" fill="#6b6e76"/><path d="M10.5 314 H19.5 L23.5 321 L19.5 328 H10.5 L6.5 321Z" fill="none" stroke="#444" stroke-width="1"/><path d="M15 321 H22" stroke="#222" stroke-width="1"/><circle cx="15" cy="321" r="1.3" fill="#fff" stroke="#222"/><circle cx="22" cy="321" r="1.3" fill="#fff" stroke="#222"/><path d="M28 334 L22 334 L28 328Z" fill="#6b6e76"/><path d="M36 313 Q49 313 50 324.5" fill="none" stroke="#111" stroke-width="2"/><path d="M49 313 H51.5 V322" fill="none" stroke="#bbb" stroke-width="0.8"/><rect x="34" y="311" width="4" height="4" fill="#fff" stroke="#111" stroke-width="0.9"/><rect x="48.5" y="323" width="4" height="4" fill="#fff" stroke="#111" stroke-width="0.9"/><path d="M56 334 L50 334 L56 328Z" fill="#6b6e76"/><path d="M9 341.5 L23 341.5 L19 358 L6 352Z" fill="url(#gBlueF)" stroke="#3a4a90" stroke-width="0.8"/><path d="M16 341.5 L12.5 355 M7.5 347 L21 349" stroke="#3a4a90" stroke-width="0.8"/><rect x="7.2" y="339.7" width="3.6" height="3.6" fill="#fff" stroke="#111" stroke-width="0.9"/><rect x="21.2" y="339.7" width="3.6" height="3.6" fill="#fff" stroke="#111" stroke-width="0.9"/><rect x="4.7" y="350.7" width="3.6" height="3.6" fill="#fff" stroke="#111" stroke-width="0.9"/><rect x="16.2" y="355.7" width="3.6" height="3.6" fill="#fff" stroke="#111" stroke-width="0.9"/><path d="M28 363 L22 363 L28 357Z" fill="#6b6e76"/><path d="M34 345 L41 341 Q51 343 52 351 L49 358 Q49 350 42 348Z" fill="url(#gBlueF)" stroke="#222" stroke-width="0.8"/><path d="M34 345 L42 348 L45 357 L37 354Z" fill="#fff" stroke="#222" stroke-width="0.8"/><path d="M56 363 L50 363 L56 357Z" fill="#6b6e76"/><path d="M6 372 L14 368.5 L23 372 V384 L15 388 L6 384Z" fill="#6c88e8" stroke="#24307a" stroke-width="0.9"/><path d="M6 372 L15 375.5 L23 372 L14 368.5Z" fill="#b8c8ff"/><path d="M15 375.5 V388" stroke="#24307a" stroke-width="0.7"/><path d="M28 391 L22 391 L28 385Z" fill="#6b6e76"/><circle cx="38.5" cy="383" r="5.8" fill="url(#gSB)" stroke="#24307a" stroke-width="0.8"/><circle cx="47" cy="373.5" r="6.2" fill="url(#gSB)" stroke="#24307a" stroke-width="0.8"/><path d="M56 391 L50 391 L56 385Z" fill="#6b6e76"/><ellipse cx="15" cy="397.5" rx="5" ry="2" fill="none" stroke="#222" stroke-width="0.9"/><path d="M4.5 403 Q15 400 26 403 V414 Q15 418 4.5 414Z" fill="#6c88e8" stroke="#24307a" stroke-width="0.9"/><ellipse cx="15" cy="410" rx="5" ry="2" fill="none" stroke="#fff" stroke-width="1.4"/><path d="M28 418 L22 418 L28 412Z" fill="#6b6e76"/><path d="M33.5 412 L40 397 L54 402 L47 416Z" fill="#7a90e0" stroke="#24307a" stroke-width="0.9"/><path d="M37 404 L51 409 M43 400 L40 413 M48 401 L44 415" stroke="#24307a" stroke-width="0.7"/><path d="M56 418 L50 418 L56 412Z" fill="#6b6e76"/><path d="M5 428 L9 424 L12 427 L16 424 L19 429 L15 432 L12 436 L8 433 L5 434Z" fill="#f0a020" stroke="#5a3a00" stroke-width="0.8"/><path d="M13 436 L17 432 L21 435 L25 433 L26 439 L22 442 L18 445 L15 441Z" fill="#fff" stroke="#333" stroke-width="0.8"/><path d="M31 445 L34 427 L37 436 L44 424 L44 434 L52 429 L47 437 L53 440 L43 442 Z" fill="url(#gOr)" stroke="#c06000" stroke-width="0.6"/><path d="M14.5 452 H20.5 L15 462Z" fill="#1a2a8a"/><rect x="4.5" y="460.5" width="10" height="5" fill="#fff" stroke="#111" stroke-width="1.1"/><path d="M16.5 465 L19.5 461 L24 466 L21 470Z" fill="#fff" stroke="#333" stroke-width="0.9"/><path d="M41.5 452 H47.5 L43 462Z" fill="#1a2a8a"/><rect x="33.5" y="461.5" width="18" height="5" fill="#fff" stroke="#111" stroke-width="1.1"/><line x1="43" y1="461.5" x2="43" y2="466.5" stroke="#111"/><circle cx="15" cy="486" r="3.5" fill="#8a8ae0" stroke="#111" stroke-width="0.8"/><circle cx="11.5" cy="492" r="3.5" fill="#fff" stroke="#111" stroke-width="0.8"/><circle cx="18.5" cy="492" r="3.5" fill="#1e2070" stroke="#111" stroke-width="0.8"/><path d="M8 491 Q8 482 15 482 Q22 482 22 491 Q22 496 15 496.5 Q8 496 8 491Z" fill="none" stroke="#111" stroke-width="1.3"/><path d="M28 503 L22 503 L28 497Z" fill="#6b6e76"/><circle cx="43" cy="485.5" r="3.5" fill="#9a9ae8" stroke="#333" stroke-width="0.7"/><circle cx="38" cy="493.5" r="3.5" fill="#fff" stroke="#333" stroke-width="0.7"/><circle cx="48" cy="493.5" r="3.5" fill="#1e2070" stroke="#333" stroke-width="0.7"/><path d="M5 512 Q9 510.5 10 512 Q19 513 20 522 V526" fill="none" stroke="#111" stroke-width="1.2"/><rect x="8" y="510" width="3" height="3" fill="#fff" stroke="#111" stroke-width="0.8"/><rect x="18.5" y="521.5" width="3" height="3" fill="#fff" stroke="#111" stroke-width="0.8"/><path d="M33 513 Q46 513 48 527" fill="none" stroke="#111" stroke-width="1.8"/><path d="M32 509 H40 M46 514 Q52 520 52 528" fill="none" stroke="#333" stroke-width="0.7" stroke-dasharray="1 1"/><rect x="39.5" y="507.5" width="3" height="3" fill="#fff" stroke="#111" stroke-width="0.8"/><rect x="50.5" y="518.5" width="3" height="3" fill="#fff" stroke="#111" stroke-width="0.8"/><path d="M56 531 L50 531 L56 525Z" fill="#6b6e76"/><path d="M6 536 H22 L23 540 H17 V552 L19 555 H11 L12 552 V540 H7Z" fill="#8a9ef0" stroke="#24307a" stroke-width="1"/><rect x="34.5" y="547" width="6" height="6" fill="#fff" stroke="#111" stroke-width="1.1"/><rect x="46.5" y="537" width="6" height="6" fill="#a0b0ff" stroke="#111" stroke-width="1.1"/><path d="M40 547 L46 542" stroke="#333" stroke-width="0.9"/><path d="M56 559 L50 559 L56 553Z" fill="#6b6e76"/><rect x="6.5" y="564.5" width="5" height="5" fill="#8a9ef0" stroke="#111" stroke-width="1"/><rect x="6.5" y="577.5" width="5" height="5" fill="#fff" stroke="#111" stroke-width="1"/><rect x="15.5" y="570.5" width="5" height="5" fill="#8a9ef0" stroke="#111" stroke-width="1"/><rect x="20.5" y="567.5" width="5" height="5" fill="#8a9ef0" stroke="#111" stroke-width="1"/><rect x="19.5" y="578.5" width="5" height="5" fill="#8a9ef0" stroke="#111" stroke-width="1"/><rect x="32.5" y="565.5" width="4" height="13" fill="#fff" stroke="#111" stroke-width="1"/><path d="M36.5 566 H42 V569" fill="none" stroke="#333" stroke-width="0.8"/><path d="M39 582 L50 571 L53 574 L42 585Z" fill="#7a90e0" stroke="#24307a" stroke-width="0.9"/><path d="M5.5 594.5 L14 591.5 L24.5 595 V606 L15 611 L5.5 607Z" fill="#6c88e8" stroke="#24307a" stroke-width="0.9"/><path d="M5.5 594.5 L15 598 L24.5 595 L14 591.5Z" fill="#b8c8ff"/><path d="M12 605 L18 603 V610 L12 611Z" fill="#fff" stroke="#333" stroke-width="0.7"/><path d="M28 615 L22 615 L28 609Z" fill="#6b6e76"/><path d="M32.5 610.5 L36 606 H53 L49 610.5Z" fill="#7a90e0" stroke="#111" stroke-width="0.9"/><path d="M37 593 V606 M43 593 V606 M49 593 V606" stroke="#fff" stroke-width="2"/><path d="M36 606 H53" stroke="#111" stroke-dasharray="2 1.5"/><path d="M56 615 L50 615 L56 609Z" fill="#6b6e76"/><rect x="6.0" y="620.5" width="4.5" height="4.5" fill="#8a8ed0" stroke="#111" stroke-width="1"/><rect x="6.0" y="627.0" width="4.5" height="4.5" fill="#8a8ed0" stroke="#111" stroke-width="1"/><rect x="6.0" y="633.5" width="4.5" height="4.5" fill="#fff" stroke="#111" stroke-width="1"/><rect x="12.5" y="620.5" width="4.5" height="4.5" fill="#8a8ed0" stroke="#111" stroke-width="1"/><rect x="12.5" y="627.0" width="4.5" height="4.5" fill="#8a8ed0" stroke="#111" stroke-width="1"/><rect x="12.5" y="633.5" width="4.5" height="4.5" fill="#8a8ed0" stroke="#111" stroke-width="1"/><rect x="19.0" y="620.5" width="4.5" height="4.5" fill="#8a8ed0" stroke="#111" stroke-width="1"/><rect x="19.0" y="627.0" width="4.5" height="4.5" fill="#8a8ed0" stroke="#111" stroke-width="1"/><rect x="19.0" y="633.5" width="4.5" height="4.5" fill="#8a8ed0" stroke="#111" stroke-width="1"/><path d="M28 643 L22 643 L28 637Z" fill="#6b6e76"/><rect x="38.5" y="621" width="10" height="5" fill="#fff" stroke="#111" stroke-width="1"/><rect x="40" y="627.5" width="7" height="5" fill="#fff" stroke="#111" stroke-width="1"/><rect x="38.5" y="634" width="10" height="5" fill="#fff" stroke="#111" stroke-width="1"/><line x1="43.5" y1="619" x2="43.5" y2="641" stroke="#d03020" stroke-width="1.5"/><path d="M56 671 L50 671 L56 665Z" fill="#6b6e76"/><path d="M5.5 650 L12 647.5 L14 667 L7 668.5Z" fill="#fff" stroke="#111" stroke-width="1"/><path d="M12 653 L19 648 L24 651 L17 668 L12 669Z" fill="#7a90e0" stroke="#24307a" stroke-width="1"/><path d="M28 671 L22 671 L28 665Z" fill="#6b6e76"/><path d="M45 655.5 L48 657.5 L45 659.5 M49 655.5 L52 657.5 L49 659.5" fill="none" stroke="#111" stroke-width="1.4"/></svg>
<div class="a" style="left:64px;top:188px;width:1146px;height:470px;background:#a0a0a0"></div>
<div class="a" style="left:639px;top:188px;width:571px;height:26px;background:#c0c0c0"></div>
<div class="a" style="left:220px;top:217px;width:417px;height:285px;background:#979ca3"></div>
<svg style="left:220px;top:217px" width="417" height="285" viewBox="0 0 417 285"><line x1="0.5" y1="0" x2="0.5" y2="285" stroke="#7d8188" stroke-width="1"/><line x1="24.5" y1="0" x2="24.5" y2="285" stroke="#7d8188" stroke-width="1"/><line x1="49.5" y1="0" x2="49.5" y2="285" stroke="#7d8188" stroke-width="1"/><line x1="74.5" y1="0" x2="74.5" y2="285" stroke="#7d8188" stroke-width="1"/><line x1="98.5" y1="0" x2="98.5" y2="285" stroke="#7d8188" stroke-width="1"/><line x1="123.5" y1="0" x2="123.5" y2="285" stroke="#7d8188" stroke-width="1"/><line x1="148.5" y1="0" x2="148.5" y2="285" stroke="#7d8188" stroke-width="1"/><line x1="172.5" y1="0" x2="172.5" y2="285" stroke="#7d8188" stroke-width="1"/><line x1="197.5" y1="0" x2="197.5" y2="285" stroke="#7d8188" stroke-width="1"/><line x1="222.5" y1="0" x2="222.5" y2="285" stroke="#7d8188" stroke-width="1"/><line x1="0" y1="13.5" x2="417" y2="13.5" stroke="#7d8188" stroke-width="1"/><line x1="247.5" y1="0" x2="247.5" y2="285" stroke="#7d8188" stroke-width="1"/><line x1="0" y1="37.5" x2="417" y2="37.5" stroke="#7d8188" stroke-width="1"/><line x1="271.5" y1="0" x2="271.5" y2="285" stroke="#7d8188" stroke-width="1"/><line x1="0" y1="62.5" x2="417" y2="62.5" stroke="#7d8188" stroke-width="1"/><line x1="296.5" y1="0" x2="296.5" y2="285" stroke="#7d8188" stroke-width="1"/><line x1="0" y1="87.5" x2="417" y2="87.5" stroke="#7d8188" stroke-width="1"/><line x1="321.5" y1="0" x2="321.5" y2="285" stroke="#7d8188" stroke-width="1"/><line x1="0" y1="111.5" x2="417" y2="111.5" stroke="#7d8188" stroke-width="1"/><line x1="345.5" y1="0" x2="345.5" y2="285" stroke="#7d8188" stroke-width="1"/><line x1="0" y1="136.5" x2="417" y2="136.5" stroke="#7d8188" stroke-width="1"/><line x1="370.5" y1="0" x2="370.5" y2="285" stroke="#7d8188" stroke-width="1"/><line x1="0" y1="161.5" x2="417" y2="161.5" stroke="#7d8188" stroke-width="1"/><line x1="395.5" y1="0" x2="395.5" y2="285" stroke="#7d8188" stroke-width="1"/><line x1="0" y1="185.5" x2="417" y2="185.5" stroke="#7d8188" stroke-width="1"/><line x1="0" y1="210.5" x2="417" y2="210.5" stroke="#7d8188" stroke-width="1"/><line x1="0" y1="235.5" x2="417" y2="235.5" stroke="#7d8188" stroke-width="1"/><line x1="0" y1="259.5" x2="417" y2="259.5" stroke="#7d8188" stroke-width="1"/><line x1="0" y1="284.5" x2="417" y2="284.5" stroke="#7d8188" stroke-width="1"/></svg>
<div class="a" style="left:639px;top:217px;width:499px;height:290px;background:#979ca3"></div>
<svg style="left:639px;top:217px" width="499" height="290" viewBox="0 0 499 290"><line x1="23.5" y1="0" x2="23.5" y2="290" stroke="#7d8188" stroke-width="1"/><line x1="48.5" y1="0" x2="48.5" y2="290" stroke="#7d8188" stroke-width="1"/><line x1="73.5" y1="0" x2="73.5" y2="290" stroke="#7d8188" stroke-width="1"/><line x1="98.5" y1="0" x2="98.5" y2="290" stroke="#7d8188" stroke-width="1"/><line x1="123.5" y1="0" x2="123.5" y2="290" stroke="#7d8188" stroke-width="1"/><line x1="148.5" y1="0" x2="148.5" y2="290" stroke="#7d8188" stroke-width="1"/><line x1="173.5" y1="0" x2="173.5" y2="290" stroke="#7d8188" stroke-width="1"/><line x1="198.5" y1="0" x2="198.5" y2="290" stroke="#7d8188" stroke-width="1"/><line x1="223.5" y1="0" x2="223.5" y2="290" stroke="#7d8188" stroke-width="1"/><line x1="0" y1="14.5" x2="499" y2="14.5" stroke="#7d8188" stroke-width="1"/><line x1="248.5" y1="0" x2="248.5" y2="290" stroke="#7d8188" stroke-width="1"/><line x1="0" y1="39.5" x2="499" y2="39.5" stroke="#7d8188" stroke-width="1"/><line x1="273.5" y1="0" x2="273.5" y2="290" stroke="#7d8188" stroke-width="1"/><line x1="0" y1="64.5" x2="499" y2="64.5" stroke="#7d8188" stroke-width="1"/><line x1="298.5" y1="0" x2="298.5" y2="290" stroke="#7d8188" stroke-width="1"/><line x1="0" y1="89.5" x2="499" y2="89.5" stroke="#7d8188" stroke-width="1"/><line x1="323.5" y1="0" x2="323.5" y2="290" stroke="#7d8188" stroke-width="1"/><line x1="0" y1="114.5" x2="499" y2="114.5" stroke="#7d8188" stroke-width="1"/><line x1="348.5" y1="0" x2="348.5" y2="290" stroke="#7d8188" stroke-width="1"/><line x1="0" y1="139.5" x2="499" y2="139.5" stroke="#7d8188" stroke-width="1"/><line x1="373.5" y1="0" x2="373.5" y2="290" stroke="#7d8188" stroke-width="1"/><line x1="0" y1="164.5" x2="499" y2="164.5" stroke="#7d8188" stroke-width="1"/><line x1="398.5" y1="0" x2="398.5" y2="290" stroke="#7d8188" stroke-width="1"/><line x1="0" y1="189.5" x2="499" y2="189.5" stroke="#7d8188" stroke-width="1"/><line x1="423.5" y1="0" x2="423.5" y2="290" stroke="#7d8188" stroke-width="1"/><line x1="0" y1="214.5" x2="499" y2="214.5" stroke="#7d8188" stroke-width="1"/><line x1="448.5" y1="0" x2="448.5" y2="290" stroke="#7d8188" stroke-width="1"/><line x1="0" y1="239.5" x2="499" y2="239.5" stroke="#7d8188" stroke-width="1"/><line x1="473.5" y1="0" x2="473.5" y2="290" stroke="#7d8188" stroke-width="1"/><line x1="0" y1="264.5" x2="499" y2="264.5" stroke="#7d8188" stroke-width="1"/><line x1="498.5" y1="0" x2="498.5" y2="290" stroke="#7d8188" stroke-width="1"/><line x1="0" y1="289.5" x2="499" y2="289.5" stroke="#7d8188" stroke-width="1"/></svg>
<div class="a" style="left:637px;top:188px;width:2px;height:470px;background:#e9ecf2"></div>
<div class="a" style="left:64px;top:214px;width:1146px;height:3px;background:#e9ecf2"></div>
<div class="a" style="left:64px;top:658px;width:1146px;height:22px;background:#e1e5ee"></div>
<div class="a" style="left:0px;top:681px;width:1365px;height:27px;background:#e1e5ee"></div>
<div class="a" style="left:0px;top:707px;width:1365px;height:1px;background:#a9aeb8"></div>
<div class="a" style="left:0px;top:708px;width:1365px;height:20px;background:#e1e5ee"></div>
<div class="a" style="left:466px;top:217px;width:1px;height:37px;background:#4fa05a"></div>
<div class="a" style="left:466px;top:254px;width:170px;height:2px;background:#a24a50"></div>
<div class="a" style="left:887px;top:217px;width:2px;height:20px;background:#4fa05a"></div>
<div class="a" style="left:933px;top:256px;width:204px;height:2px;background:#a24a50"></div>
<div class="a" style="left:64px;top:188px;width:62px;height:19px;background:#cfd1d6;border-radius:0 0 3px 0"></div>
<div class="t" style="left:73px;top:192px;font-size:12px;color:#5e5e5e;">Top</div>
<div class="a" style="left:101px;top:191px;width:1px;height:14px;background:#5e5e5e"></div>
<svg style="left:103px;top:195px" width="8" height="5" viewBox="0 0 8 5"><path d="M0 0 L7 0 L3.5 4Z" fill="#5e5e5e"/></svg>
<div class="a" style="left:64px;top:217px;width:56px;height:19px;background:#cfd1d6;border-radius:0 0 3px 0"></div>
<div class="t" style="left:73px;top:221px;font-size:12px;color:#5e5e5e;">Front</div>
<div class="a" style="left:109px;top:220px;width:1px;height:14px;background:#5e5e5e"></div>
<svg style="left:111px;top:224px" width="8" height="5" viewBox="0 0 8 5"><path d="M0 0 L7 0 L3.5 4Z" fill="#5e5e5e"/></svg>
<div class="a" style="left:639px;top:188px;width:88px;height:19px;background:#cfd1d6;border-radius:0 0 3px 0"></div>
<div class="t" style="left:648px;top:192px;font-size:12px;color:#5e5e5e;">Perspective</div>
<div class="a" style="left:716px;top:191px;width:1px;height:14px;background:#5e5e5e"></div>
<svg style="left:718px;top:195px" width="8" height="5" viewBox="0 0 8 5"><path d="M0 0 L7 0 L3.5 4Z" fill="#5e5e5e"/></svg>
<div class="a" style="left:639px;top:217px;width:56px;height:19px;background:#a6b8cf;border-radius:0 0 3px 0"></div>
<div class="t" style="left:648px;top:221px;font-size:12px;color:#000;">Right</div>
<div class="a" style="left:684px;top:220px;width:1px;height:14px;background:#000"></div>
<svg style="left:686px;top:224px" width="8" height="5" viewBox="0 0 8 5"><path d="M0 0 L7 0 L3.5 4Z" fill="#000"/></svg>
<svg style="left:100px;top:590px" width="45" height="40" viewBox="0 0 45 40"><path d="M1.5 1 V31 H30" fill="none" stroke="#6a6a6a" stroke-width="2"/><text x="3" y="4" font-family="Liberation Sans" font-size="12.5" fill="#585858" stroke="#585858" stroke-width="0.2">z</text><text x="32" y="34" font-family="Liberation Sans" font-size="12.5" fill="#585858" stroke="#585858" stroke-width="0.2">x</text></svg>
<svg style="left:675px;top:590px" width="45" height="40" viewBox="0 0 45 40"><path d="M1.5 1 V31 H30" fill="none" stroke="#6a6a6a" stroke-width="2"/><text x="3" y="4" font-family="Liberation Sans" font-size="12.5" fill="#585858" stroke="#585858" stroke-width="0.2">z</text><text x="32" y="34" font-family="Liberation Sans" font-size="12.5" fill="#585858" stroke="#585858" stroke-width="0.2">y</text></svg>
<svg style="left:0px;top:0px" width="1" height="1" viewBox="0 0 1 1"><path d="M300 253 C299.2 257.7 296.7 263.7 295 281 C293.3 298.3 291.2 331.5 290 357 C288.8 382.5 287.7 412.8 288 434 C288.3 455.2 290.4 468.5 292 484 C293.6 499.5 295.7 513.0 297.5 527 C299.3 541.0 299.9 555.2 303 568 C306.1 580.8 312.5 592.8 316 604 C319.5 615.2 322.7 629.8 324 635" fill="none" stroke="#000" stroke-width="1.15"/><path d="M305 249 C330 244 360 240 400 237.5 C430 236 450 235 464 233.5 Q467.5 234 467.5 237 L467.5 243.5 L453 247.5 L443 261 L437.5 251 C400 252 360 254 330 258 L309 262.5 Q306 261 305.5 257Z" fill="#000"/><path d="M309.5 253 V258 M313.5 252 V257 M446.5 239 V245 M450.5 239 V245 M455.5 238 V244 M459.5 237.5 V243" stroke="#777" stroke-width="1" stroke-dasharray="2 1"/><path d="M316 259 H625" stroke="#111" stroke-width="1.2"/><rect x="297.5" y="250.5" width="4" height="4" fill="#fff" stroke="#000" stroke-width="1"/><rect x="303.5" y="248.5" width="4" height="4" fill="#fff" stroke="#000" stroke-width="1"/><rect x="292.5" y="278.5" width="4" height="4" fill="#fff" stroke="#000" stroke-width="1"/><rect x="287.5" y="354.5" width="4" height="4" fill="#fff" stroke="#000" stroke-width="1"/><rect x="285.5" y="431.5" width="4" height="4" fill="#fff" stroke="#000" stroke-width="1"/><rect x="289.5" y="481.5" width="4" height="4" fill="#fff" stroke="#000" stroke-width="1"/><rect x="295.5" y="524.5" width="4" height="4" fill="#fff" stroke="#000" stroke-width="1"/><rect x="300.5" y="565.5" width="4" height="4" fill="#fff" stroke="#000" stroke-width="1"/><rect x="313.5" y="601.5" width="4" height="4" fill="#fff" stroke="#000" stroke-width="1"/><rect x="321.5" y="632.5" width="4" height="4" fill="#fff" stroke="#000" stroke-width="1"/></svg>
<svg style="left:0px;top:0px" width="1" height="1" viewBox="0 0 1 1"><path d="M905 545 C904.3 547.8 903.3 556.5 901 562 C898.7 567.5 895.8 573.0 891 578 C886.2 583.0 878.0 588.2 872 592 C866.0 595.8 857.8 599.5 855 601" fill="none" stroke="#111" stroke-width="1" stroke-dasharray="1 3"/><path d="M913 545 C912.3 547.8 911.0 556.5 909 562 C907.0 567.5 904.7 572.5 901 578 C897.3 583.5 891.7 589.7 887 595 C882.3 600.3 875.3 607.5 873 610" fill="none" stroke="#111" stroke-width="1" stroke-dasharray="1 3"/><path d="M905 262 C904.9 265.5 906.0 266.8 904.5 283 C903.0 299.2 898.6 333.2 896 359 C893.4 384.8 889.0 416.5 889 438 C889.0 459.5 894.2 472.3 896 488 C897.8 503.7 901.8 517.7 900 532 C898.2 546.3 896.0 560.8 885 574 C874.0 587.2 842.5 604.8 834 611" fill="none" stroke="#000" stroke-width="1.15"/><path d="M925 262 C924.7 265.5 923.7 266.8 923 283 C922.3 299.2 922.1 333.2 921 359 C919.9 384.8 917.4 416.5 916.5 438 C915.6 459.5 916.6 472.3 915.5 488 C914.4 503.7 913.2 517.7 910 532 C906.8 546.3 907.8 555.7 896 574 C884.2 592.3 848.5 630.7 839 642" fill="none" stroke="#000" stroke-width="1.15"/><path d="M853 238 Q851 238 851 243 L851 255 Q852 261 870 261.5 L925 262 Q933 262 933 255 L933 242 Q933 236 928 235 L915 235 Q912 238 905 238Z" fill="#000"/><rect x="901.5" y="280.5" width="4" height="4" fill="#fff" stroke="#000" stroke-width="1"/><rect x="920.5" y="280.5" width="4" height="4" fill="#fff" stroke="#000" stroke-width="1"/><rect x="893.5" y="356.5" width="4" height="4" fill="#fff" stroke="#000" stroke-width="1"/><rect x="918.5" y="356.5" width="4" height="4" fill="#fff" stroke="#000" stroke-width="1"/><rect x="886.5" y="435.5" width="4" height="4" fill="#fff" stroke="#000" stroke-width="1"/><rect x="913.5" y="435.5" width="4" height="4" fill="#fff" stroke="#000" stroke-width="1"/><rect x="895.5" y="485.5" width="4" height="4" fill="#fff" stroke="#000" stroke-width="1"/><rect x="913.5" y="485.5" width="4" height="4" fill="#fff" stroke="#000" stroke-width="1"/><rect x="898.5" y="529.5" width="4" height="4" fill="#fff" stroke="#000" stroke-width="1"/><rect x="907.5" y="529.5" width="4" height="4" fill="#fff" stroke="#000" stroke-width="1"/><rect x="882.5" y="571.5" width="4" height="4" fill="#fff" stroke="#000" stroke-width="1"/><rect x="893.5" y="571.5" width="4" height="4" fill="#fff" stroke="#000" stroke-width="1"/><rect x="831.5" y="608.5" width="4" height="4" fill="#fff" stroke="#000" stroke-width="1"/><rect x="836.5" y="639.5" width="4" height="4" fill="#fff" stroke="#000" stroke-width="1"/></svg>
<svg style="left:0px;top:0px" width="1" height="1" viewBox="0 0 1 1"><rect x="319" y="188" width="113" height="26" fill="#999da5"/><path d="M321.5 188 V214" stroke="#90949b" stroke-width="1"/><path d="M326.5 188 V214" stroke="#90949b" stroke-width="1"/><path d="M331.5 188 V214" stroke="#90949b" stroke-width="1"/><path d="M336.5 188 V214" stroke="#90949b" stroke-width="1"/><path d="M341.5 188 V214" stroke="#90949b" stroke-width="1"/><path d="M346.5 188 V214" stroke="#90949b" stroke-width="1"/><path d="M351.5 188 V214" stroke="#90949b" stroke-width="1"/><path d="M356.5 188 V214" stroke="#90949b" stroke-width="1"/><path d="M361.5 188 V214" stroke="#90949b" stroke-width="1"/><path d="M366.5 188 V214" stroke="#90949b" stroke-width="1"/><path d="M371.5 188 V214" stroke="#90949b" stroke-width="1"/><path d="M376.5 188 V214" stroke="#90949b" stroke-width="1"/><path d="M381.5 188 V214" stroke="#90949b" stroke-width="1"/><path d="M386.5 188 V214" stroke="#90949b" stroke-width="1"/><path d="M391.5 188 V214" stroke="#90949b" stroke-width="1"/><path d="M396.5 188 V214" stroke="#90949b" stroke-width="1"/><path d="M401.5 188 V214" stroke="#90949b" stroke-width="1"/><path d="M406.5 188 V214" stroke="#90949b" stroke-width="1"/><path d="M411.5 188 V214" stroke="#90949b" stroke-width="1"/><path d="M416.5 188 V214" stroke="#90949b" stroke-width="1"/><path d="M421.5 188 V214" stroke="#90949b" stroke-width="1"/><path d="M426.5 188 V214" stroke="#90949b" stroke-width="1"/><path d="M431.5 188 V214" stroke="#90949b" stroke-width="1"/><path d="M319 190.5 H432" stroke="#90949b" stroke-width="1"/><path d="M319 195.5 H432" stroke="#90949b" stroke-width="1"/><path d="M319 200.5 H432" stroke="#90949b" stroke-width="1"/><path d="M319 205.5 H432" stroke="#90949b" stroke-width="1"/><path d="M319 210.5 H432" stroke="#90949b" stroke-width="1"/><path d="M342 197.5 H407" stroke="#111" stroke-width="1"/><path d="M369 200.5 H431" stroke="#a8525a" stroke-width="1.4"/><path d="M341 194 Q341 191.5 344 191.5 L369 191.5 Q373 191.5 372 195 L367 206.5 Q366 208.5 362 208.5 L346 208.5 Q341.5 208.5 341 204Z" fill="none" stroke="#000" stroke-width="2.8"/><rect x="332" y="191" width="7" height="12" fill="#000"/><rect x="335.5" y="192.5" width="3" height="3" fill="#fff"/><rect x="334.5" y="199.5" width="3" height="2" fill="#fff"/><rect x="337.5" y="208.5" width="6" height="5" fill="#000"/><rect x="338.5" y="209.5" width="2" height="3" fill="#fff"/><rect x="341.5" y="209.5" width="1.5" height="3" fill="#fff"/></svg>
<svg style="left:0px;top:0px" width="1" height="1" viewBox="0 0 1 1"><path d="M889 202 L905 195 L935 194 L938 203 L900 203Z" fill="#9a9a9a"/><path d="M905 198 L927 198" stroke="#222" stroke-width="1"/><rect x="927" y="196" width="5" height="5" fill="#fff" stroke="#000"/><rect x="927" y="203" width="5" height="5" fill="#fff" stroke="#000"/><rect x="927" y="208" width="5" height="5" fill="#fff" stroke="#000"/></svg>
<svg style="left:64px;top:657px" width="79" height="22" viewBox="0 0 79 22"><path d="M0.5 0 L0.5 8 L9 20.5 L75 20.5 Q77.5 20.5 77.5 18 L77.5 0" fill="#d9dde8" stroke="#b0b5c0"/></svg>
<div class="t" style="left:75px;top:664px;font-size:11.5px;color:#111;">Perspective</div>
<svg style="left:142px;top:657px" width="39" height="22" viewBox="0 0 39 22"><path d="M0.5 0 L0.5 8 L9 20.5 L35 20.5 Q37.5 20.5 37.5 18 L37.5 0" fill="#d9dde8" stroke="#b0b5c0"/></svg>
<div class="t" style="left:153px;top:664px;font-size:11.5px;color:#111;">Top</div>
<svg style="left:180px;top:657px" width="46" height="22" viewBox="0 0 46 22"><path d="M0.5 0 L0.5 8 L9 20.5 L42 20.5 Q44.5 20.5 44.5 18 L44.5 0" fill="#d9dde8" stroke="#b0b5c0"/></svg>
<div class="t" style="left:191px;top:664px;font-size:11.5px;color:#111;">Front</div>
<svg style="left:271px;top:657px" width="30" height="22" viewBox="0 0 30 22"><path d="M0.5 0 L0.5 8 L9 20.5 L26 20.5 Q28.5 20.5 28.5 18 L28.5 0" fill="#d9dde8" stroke="#b0b5c0"/></svg>
<div class="t" style="left:0px;top:664px;font-size:11.5px;color:#111;"></div>
<svg style="left:218px;top:657px" width="55" height="22" viewBox="0 0 55 22"><path d="M0.5 0 L0.5 8 L9 20.5 L51 20.5 Q53.5 20.5 53.5 18 L53.5 0" fill="#fdfdfe" stroke="#b0b5c0"/></svg>
<div class="t" style="left:237px;top:664px;font-size:11.5px;color:#111;">Right</div>
<svg style="left:283px;top:663px" width="12" height="12" viewBox="0 0 12 12"><path d="M4 1 H7 V4 H10 V7 H7 V10 H4 V7 H1 V4 H4Z" fill="#fff" stroke="#666"/></svg>
<div class="a" style="left:3px;top:685px;width:1px;height:20px;background:#c3c7cf"></div>
<div class="a" style="left:5px;top:685px;width:1px;height:20px;background:#c3c7cf"></div>
<div class="chk" style="left:11px;top:689px"></div>
<svg style="left:11px;top:689px" width="13" height="13" viewBox="0 0 13 13"><path d="M3.5 6.5 L5.8 10 L9.8 2.8" fill="none" stroke="#4a5a9c" stroke-width="1.4"/></svg>
<div class="t" style="left:30px;top:691px;font-size:11px;color:#111;letter-spacing:-0.35px">End</div>
<div class="chk" style="left:55px;top:689px"></div>
<div class="t" style="left:73.5px;top:691px;font-size:11px;color:#111;letter-spacing:-0.35px">Near</div>
<div class="chk" style="left:103px;top:689px"></div>
<svg style="left:103px;top:689px" width="13" height="13" viewBox="0 0 13 13"><path d="M3.5 6.5 L5.8 10 L9.8 2.8" fill="none" stroke="#4a5a9c" stroke-width="1.4"/></svg>
<div class="t" style="left:121.5px;top:691px;font-size:11px;color:#111;letter-spacing:-0.35px">Point</div>
<div class="chk" style="left:152px;top:689px"></div>
<svg style="left:152px;top:689px" width="13" height="13" viewBox="0 0 13 13"><path d="M3.5 6.5 L5.8 10 L9.8 2.8" fill="none" stroke="#4a5a9c" stroke-width="1.4"/></svg>
<div class="t" style="left:170.5px;top:691px;font-size:11px;color:#111;letter-spacing:-0.35px">Mid</div>
<div class="chk" style="left:194px;top:689px"></div>
<svg style="left:194px;top:689px" width="13" height="13" viewBox="0 0 13 13"><path d="M3.5 6.5 L5.8 10 L9.8 2.8" fill="none" stroke="#4a5a9c" stroke-width="1.4"/></svg>
<div class="t" style="left:212px;top:691px;font-size:11px;color:#111;letter-spacing:-0.35px">Cen</div>
<div class="chk" style="left:238px;top:689px"></div>
<svg style="left:238px;top:689px" width="13" height="13" viewBox="0 0 13 13"><path d="M3.5 6.5 L5.8 10 L9.8 2.8" fill="none" stroke="#4a5a9c" stroke-width="1.4"/></svg>
<div class="t" style="left:256px;top:691px;font-size:11px;color:#111;letter-spacing:-0.35px">Int</div>
<div class="chk" style="left:276px;top:689px"></div>
<div class="t" style="left:293.5px;top:691px;font-size:11px;color:#111;letter-spacing:-0.35px">Perp</div>
<div class="chk" style="left:322px;top:689px"></div>
<div class="t" style="left:340.5px;top:691px;font-size:11px;color:#111;letter-spacing:-0.35px">Tan</div>
<div class="chk" style="left:366px;top:689px"></div>
<svg style="left:366px;top:689px" width="13" height="13" viewBox="0 0 13 13"><path d="M3.5 6.5 L5.8 10 L9.8 2.8" fill="none" stroke="#4a5a9c" stroke-width="1.4"/></svg>
<div class="t" style="left:384px;top:691px;font-size:11px;color:#111;letter-spacing:-0.35px">Quad</div>
<div class="chk" style="left:417px;top:689px"></div>
<div class="t" style="left:435px;top:691px;font-size:11px;color:#111;letter-spacing:-0.35px">Knot</div>
<div class="chk" style="left:464px;top:689px"></div>
<div class="t" style="left:482px;top:691px;font-size:11px;color:#111;letter-spacing:-0.35px">Vertex</div>
<div class="a" style="left:518px;top:688px;width:15px;height:15px;border:1px solid #8a8a8a;border-radius:4px;background:linear-gradient(#f8f8f8,#dcdcdc)"></div>
<div class="t" style="left:537px;top:691px;font-size:11px;color:#111;letter-spacing:-0.35px">Project</div>
<div class="a" style="left:576px;top:688px;width:15px;height:15px;border:1px solid #8a8a8a;border-radius:4px;background:linear-gradient(#f8f8f8,#dcdcdc)"></div>
<div class="t" style="left:595px;top:691px;font-size:11px;color:#111;letter-spacing:-0.35px">Disable</div>
<div class="a" style="left:0px;top:707px;width:1365px;height:1px;background:#a9aeb8"></div>
<div class="a" style="left:56px;top:708px;width:1px;height:20px;background:#b7bcc6"></div>
<div class="a" style="left:144px;top:708px;width:1px;height:20px;background:#b7bcc6"></div>
<div class="a" style="left:232px;top:708px;width:1px;height:20px;background:#b7bcc6"></div>
<div class="a" style="left:320px;top:708px;width:1px;height:20px;background:#b7bcc6"></div>
<div class="a" style="left:408px;top:708px;width:1px;height:20px;background:#b7bcc6"></div>
<div class="a" style="left:581px;top:708px;width:1px;height:20px;background:#b7bcc6"></div>
<div class="t" style="left:7px;top:713px;font-size:12px;color:#111;">CPlane</div>
<div class="t" style="left:76px;top:713px;font-size:12px;color:#111;">x -52.657</div>
<div class="t" style="left:163px;top:713px;font-size:12px;color:#111;">y -160.046</div>
<div class="t" style="left:257px;top:713px;font-size:12px;color:#111;">z 0.000</div>
<div class="t" style="left:336px;top:713px;font-size:12px;color:#111;">Millimeters</div>
<div class="a" style="left:412px;top:713px;width:14px;height:14px;background:#000"></div>
<div class="t" style="left:428.5px;top:713px;font-size:12px;color:#111;">SURF</div>
<div class="a" style="left:583px;top:708px;width:1px;height:20px;background:#b7bcc6"></div>
<div class="a" style="left:657px;top:708px;width:1px;height:20px;background:#b7bcc6"></div>
<div class="a" style="left:704px;top:708px;width:1px;height:20px;background:#b7bcc6"></div>
<div class="a" style="left:757px;top:708px;width:1px;height:20px;background:#b7bcc6"></div>
<div class="a" style="left:812px;top:708px;width:1px;height:20px;background:#b7bcc6"></div>
<div class="a" style="left:896px;top:708px;width:1px;height:20px;background:#b7bcc6"></div>
<div class="a" style="left:963px;top:708px;width:1px;height:20px;background:#b7bcc6"></div>
<div class="a" style="left:1075px;top:708px;width:1px;height:20px;background:#b7bcc6"></div>
<div class="a" style="left:1117px;top:708px;width:1px;height:20px;background:#b7bcc6"></div>
<div class="a" style="left:758px;top:708px;width:54px;height:20px;background:#eaf1fa"></div>
<div class="t" style="left:592px;top:713px;font-size:12px;color:#111;">Grid Snap</div>
<div class="t" style="left:665.5px;top:713px;font-size:12px;color:#111;">Ortho</div>
<div class="t" style="left:714.5px;top:713px;font-size:12px;color:#111;">Planar</div>
<div class="t" style="left:823.5px;top:713px;font-size:12px;color:#111;">SmartTrack</div>
<div class="t" style="left:907.5px;top:713px;font-size:12px;color:#111;">Gumball</div>
<div class="t" style="left:978.5px;top:713px;font-size:12px;color:#111;">Record History</div>
<div class="t" style="left:766.5px;top:713px;font-size:12px;color:#111;font-weight:bold">Osnap</div>
<div class="t" style="left:1083px;top:713px;font-size:12px;color:#111;">Filter</div>
<div class="t" style="left:1121px;top:713px;font-size:12px;color:#111;">Memory use: 461 MB</div>
<div class="a" style="left:1082px;top:725px;width:259px;height:3px;border:1px solid #333;border-bottom:none;background:#fff"></div>
<div class="a" style="left:1358px;top:708px;width:1px;height:20px;background:#b7bcc6"></div>
<div class="a" style="left:1217px;top:191px;width:148px;height:486px;background:#fff;border-left:1px solid #a9aeb8;border-top:1px solid #a9aeb8"></div>
<div class="a" style="left:1218px;top:192px;width:147px;height:26px;background:#e4e7ee"></div>
<div class="a" style="left:1218px;top:217px;width:147px;height:1px;background:#a9aeb8"></div>
<div class="a" style="left:1218px;top:218px;width:147px;height:20px;background:#fff"></div>
<div class="a" style="left:1218px;top:238px;width:147px;height:1px;background:#c8ccd4"></div>
<div class="a" style="left:1218px;top:239px;width:147px;height:22px;background:linear-gradient(#ffffff,#f3f4f6)"></div>
<div class="a" style="left:1218px;top:261px;width:147px;height:1px;background:#d5d8de"></div>
<div class="a" style="left:1297px;top:240px;width:1px;height:21px;background:#e3e5e9"></div>
<div class="a" style="left:1314px;top:240px;width:1px;height:21px;background:#e3e5e9"></div>
<div class="a" style="left:1331px;top:240px;width:1px;height:21px;background:#e3e5e9"></div>
<div class="a" style="left:1348px;top:240px;width:1px;height:21px;background:#e3e5e9"></div>
<div class="t" style="left:1224.5px;top:246px;font-size:10.5px;color:#111;">Name</div>
<div class="t" style="left:1226.5px;top:267px;font-size:10.5px;color:#111;">Default</div>
<svg style="left:1318px;top:265px" width="9" height="14" viewBox="0 0 9 14"><path d="M4.5 0.5 C7.5 0.5 8.5 2.5 8.5 4.5 C8.5 6.5 6.5 7.5 6 10 L3 10 C2.5 7.5 0.5 6.5 0.5 4.5 C0.5 2.5 1.5 0.5 4.5 0.5Z" fill="#4a90d0" stroke="#1d4f86" stroke-width="0.8"/><rect x="3" y="10.5" width="3" height="2.5" fill="#222"/></svg>
<svg style="left:1334px;top:265px" width="12" height="13" viewBox="0 0 12 13"><rect x="0.5" y="6.5" width="7" height="6" fill="#fff" stroke="#000"/><path d="M5.5 6.5 V3 Q5.5 0.5 8 0.5 Q10.5 0.5 10.5 3 V5" fill="none" stroke="#000" stroke-width="1.1"/></svg>
<div class="a" style="left:1351px;top:265px;width:13px;height:13px;background:#000;border:1px solid #000"></div>
<div class="t" style="left:1226.5px;top:284px;font-size:10.5px;color:#111;">MESH</div>
<svg style="left:1318px;top:282px" width="9" height="14" viewBox="0 0 9 14"><path d="M4.5 0.5 C7.5 0.5 8.5 2.5 8.5 4.5 C8.5 6.5 6.5 7.5 6 10 L3 10 C2.5 7.5 0.5 6.5 0.5 4.5 C0.5 2.5 1.5 0.5 4.5 0.5Z" fill="#4a90d0" stroke="#1d4f86" stroke-width="0.8"/><rect x="3" y="10.5" width="3" height="2.5" fill="#222"/></svg>
<svg style="left:1334px;top:282px" width="12" height="13" viewBox="0 0 12 13"><rect x="0.5" y="6.5" width="7" height="6" fill="#fff" stroke="#000"/><path d="M5.5 6.5 V3 Q5.5 0.5 8 0.5 Q10.5 0.5 10.5 3 V5" fill="none" stroke="#000" stroke-width="1.1"/></svg>
<div class="a" style="left:1351px;top:282px;width:13px;height:13px;background:#808080;border:1px solid #000"></div>
<div class="a" style="left:1218px;top:297px;width:147px;height:16px;background:#3399ff;border-bottom:1px dotted #fff"></div>
<div class="t" style="left:1227px;top:299.5px;font-size:11.5px;color:#fff;font-weight:bold">SURF</div>
<svg style="left:1300px;top:300px" width="12" height="10" viewBox="0 0 12 10"><path d="M1 5 L4 9 L11 1" fill="none" stroke="#fff" stroke-width="3"/><path d="M1 5 L4 9 L11 1" fill="none" stroke="#000" stroke-width="1.6"/></svg>
<div class="a" style="left:1350px;top:299px;width:14px;height:13px;background:#000;border:1px solid #fff"></div>
<div class="t" style="left:1226.5px;top:318px;font-size:10.5px;color:#111;">Layer 03</div>
<svg style="left:1318px;top:316px" width="9" height="14" viewBox="0 0 9 14"><path d="M4.5 0.5 C7.5 0.5 8.5 2.5 8.5 4.5 C8.5 6.5 6.5 7.5 6 10 L3 10 C2.5 7.5 0.5 6.5 0.5 4.5 C0.5 2.5 1.5 0.5 4.5 0.5Z" fill="#4a90d0" stroke="#1d4f86" stroke-width="0.8"/><rect x="3" y="10.5" width="3" height="2.5" fill="#222"/></svg>
<svg style="left:1334px;top:316px" width="12" height="13" viewBox="0 0 12 13"><rect x="0.5" y="6.5" width="7" height="6" fill="#fff" stroke="#000"/><path d="M5.5 6.5 V3 Q5.5 0.5 8 0.5 Q10.5 0.5 10.5 3 V5" fill="none" stroke="#000" stroke-width="1.1"/></svg>
<div class="a" style="left:1351px;top:316px;width:13px;height:13px;background:#0000ff;border:1px solid #000"></div>
<div class="t" style="left:1226.5px;top:335px;font-size:10.5px;color:#111;">Layer 04</div>
<svg style="left:1318px;top:333px" width="9" height="14" viewBox="0 0 9 14"><path d="M4.5 0.5 C7.5 0.5 8.5 2.5 8.5 4.5 C8.5 6.5 6.5 7.5 6 10 L3 10 C2.5 7.5 0.5 6.5 0.5 4.5 C0.5 2.5 1.5 0.5 4.5 0.5Z" fill="#f2ee6a" stroke="#6f6a20" stroke-width="0.8"/><rect x="3" y="10.5" width="3" height="2.5" fill="#222"/></svg>
<svg style="left:1334px;top:333px" width="12" height="13" viewBox="0 0 12 13"><rect x="0.5" y="6.5" width="7" height="6" fill="#fff" stroke="#000"/><path d="M5.5 6.5 V3 Q5.5 0.5 8 0.5 Q10.5 0.5 10.5 3 V5" fill="none" stroke="#000" stroke-width="1.1"/></svg>
<div class="a" style="left:1351px;top:333px;width:13px;height:13px;background:#007f00;border:1px solid #000"></div>
<div class="t" style="left:1226.5px;top:352px;font-size:10.5px;color:#111;">Layer 05</div>
<svg style="left:1318px;top:350px" width="9" height="14" viewBox="0 0 9 14"><path d="M4.5 0.5 C7.5 0.5 8.5 2.5 8.5 4.5 C8.5 6.5 6.5 7.5 6 10 L3 10 C2.5 7.5 0.5 6.5 0.5 4.5 C0.5 2.5 1.5 0.5 4.5 0.5Z" fill="#f2ee6a" stroke="#6f6a20" stroke-width="0.8"/><rect x="3" y="10.5" width="3" height="2.5" fill="#222"/></svg>
<svg style="left:1334px;top:350px" width="12" height="13" viewBox="0 0 12 13"><rect x="0.5" y="6.5" width="7" height="6" fill="#fff" stroke="#000"/><path d="M5.5 6.5 V3 Q5.5 0.5 8 0.5 Q10.5 0.5 10.5 3 V5" fill="none" stroke="#000" stroke-width="1.1"/></svg>
<div class="a" style="left:1351px;top:350px;width:13px;height:13px;background:#fff;border:1px solid #000"></div>
<svg style="left:1218px;top:192px" width="147" height="26" viewBox="0 0 147 26"><path d="M0.5 25.5 V7 Q0.5 4.5 3.5 4.5 L21 4.5 L30.5 25.5" fill="#d9dde8" stroke="#b0b5c0"/><path d="M62.5 25.5 V7 Q62.5 5 65.5 5 L83 5 L92.5 25.5" fill="#d9dde8" stroke="#b0b5c0"/><path d="M94.5 25.5 V7 Q94.5 5 97.5 5 L114.5 5 L134.5 25.5" fill="#d9dde8" stroke="#b0b5c0"/><path d="M31.5 25.5 V6.5 Q31.5 4 34.5 4 L51 4 L71 25.5" fill="#fafbfc" stroke="#b0b5c0"/><path d="M11.48 8.80 A5.8 5.8 0 0 1 15.10 9.98" fill="none" stroke="#e8102a" stroke-width="3.4"/><path d="M14.91 9.84 A5.8 5.8 0 0 1 17.15 12.92" fill="none" stroke="#f07010" stroke-width="3.4"/><path d="M17.08 12.70 A5.8 5.8 0 0 1 17.08 16.50" fill="none" stroke="#f0d000" stroke-width="3.4"/><path d="M17.15 16.28 A5.8 5.8 0 0 1 14.91 19.36" fill="none" stroke="#80c820" stroke-width="3.4"/><path d="M15.10 19.22 A5.8 5.8 0 0 1 11.48 20.40" fill="none" stroke="#10a040" stroke-width="3.4"/><path d="M11.72 20.40 A5.8 5.8 0 0 1 8.10 19.22" fill="none" stroke="#10a0a0" stroke-width="3.4"/><path d="M8.29 19.36 A5.8 5.8 0 0 1 6.05 16.28" fill="none" stroke="#1060e0" stroke-width="3.4"/><path d="M6.12 16.50 A5.8 5.8 0 0 1 6.12 12.70" fill="none" stroke="#3030b0" stroke-width="3.4"/><path d="M6.05 12.92 A5.8 5.8 0 0 1 8.29 9.84" fill="none" stroke="#8020a0" stroke-width="3.4"/><path d="M8.10 9.98 A5.8 5.8 0 0 1 11.72 8.80" fill="none" stroke="#c01070" stroke-width="3.4"/><path d="M35 8 L40 10 L49.5 9 V18 L42 22.5 L35.5 17Z" fill="#e8501a" stroke="#822" stroke-width="0.8"/><path d="M35.5 14.5 L42 18 L49.5 14.5 V18 L42 22.5 L35.5 17Z" fill="#fff"/><path d="M36 16.5 L42 20.5 L49.5 16.5 V18 L42 22.5Z" fill="#2a3e90"/><rect x="67.5" y="8.5" width="13" height="10" fill="#d8d8d8" stroke="#111" stroke-width="1.6"/><rect x="71" y="19" width="6" height="2.5" fill="#111"/><rect x="98.5" y="8" width="15" height="14.5" fill="#3d5fbf" stroke="#7a88b0"/><rect x="98.5" y="8" width="15" height="2.5" fill="#c8d0e8"/><text x="102" y="21" font-size="11" fill="#fff" font-family="Liberation Sans" font-weight="bold">?</text><path d="M143.80 15.00 L145.38 16.27 L145.01 17.49 L142.99 17.67 L142.39 18.39 L142.61 20.40 L141.49 21.01 L139.94 19.71 L139.00 19.80 L137.73 21.38 L136.51 21.01 L136.33 18.99 L135.61 18.39 L133.60 18.61 L132.99 17.49 L134.29 15.94 L134.20 15.00 L132.62 13.73 L132.99 12.51 L135.01 12.33 L135.61 11.61 L135.39 9.60 L136.51 8.99 L138.06 10.29 L139.00 10.20 L140.27 8.62 L141.49 8.99 L141.67 11.01 L142.39 11.61 L144.40 11.39 L145.01 12.51 L143.71 14.06Z" fill="none" stroke="#888" stroke-width="1.1" stroke-linejoin="round"/><circle cx="139" cy="15" r="1.68" fill="none" stroke="#888" stroke-width="1.1"/></svg>
<svg style="left:1218px;top:218px" width="147" height="20" viewBox="0 0 147 20"><path d="M4.5 2.5 H11 L14.5 6 V16.5 H4.5Z" fill="#f0f0f0" stroke="#222"/><path d="M24.5 2.5 H30 L31.5 4 V12.5 H24.5Z M28.5 6.5 H33.5 L35.5 8.5 V16.5 H28.5Z" fill="#f0f0f0" stroke="#222"/><path d="M45 4 L56 15 M56 4 L45 15" stroke="#222" stroke-width="2.4"/><path d="M67 13.5 L73 7 L80 13.5Z" fill="#888" stroke="#333"/><path d="M88 7.5 L101 7.5 L94.5 14Z" fill="#888" stroke="#333"/><path d="M118 4 L112 10 L118 16Z" fill="#bbb" stroke="#999"/><path d="M129 4 H142 L137 10 V16 H134 V10Z" fill="#666" stroke="#333"/></svg>
<div class="a" style="left:1218px;top:660px;width:147px;height:17px;background:#ebebeb;border-top:1px solid #e0e0e0"></div>
<svg style="left:1223px;top:664px" width="6" height="9" viewBox="0 0 6 9"><path d="M5 0 L0 4.5 L5 9Z" fill="#222"/></svg>
<svg style="left:1354px;top:664px" width="6" height="9" viewBox="0 0 6 9"><path d="M0 0 L5 4.5 L0 9Z" fill="#222"/></svg>
<div class="a" style="left:1236px;top:660px;width:39px;height:15px;background:linear-gradient(#f6f6f6,#d6d6d6);border:1px solid #9a9a9a;border-radius:2px"></div>
<svg style="left:1250px;top:665px" width="10" height="6" viewBox="0 0 10 6"><path d="M1 0 V6 M4 0 V6 M7 0 V6" stroke="#333"/></svg>
<div class="a" style="left:1217px;top:676px;width:148px;height:1px;background:#a9aeb8"></div>
</body></html>
